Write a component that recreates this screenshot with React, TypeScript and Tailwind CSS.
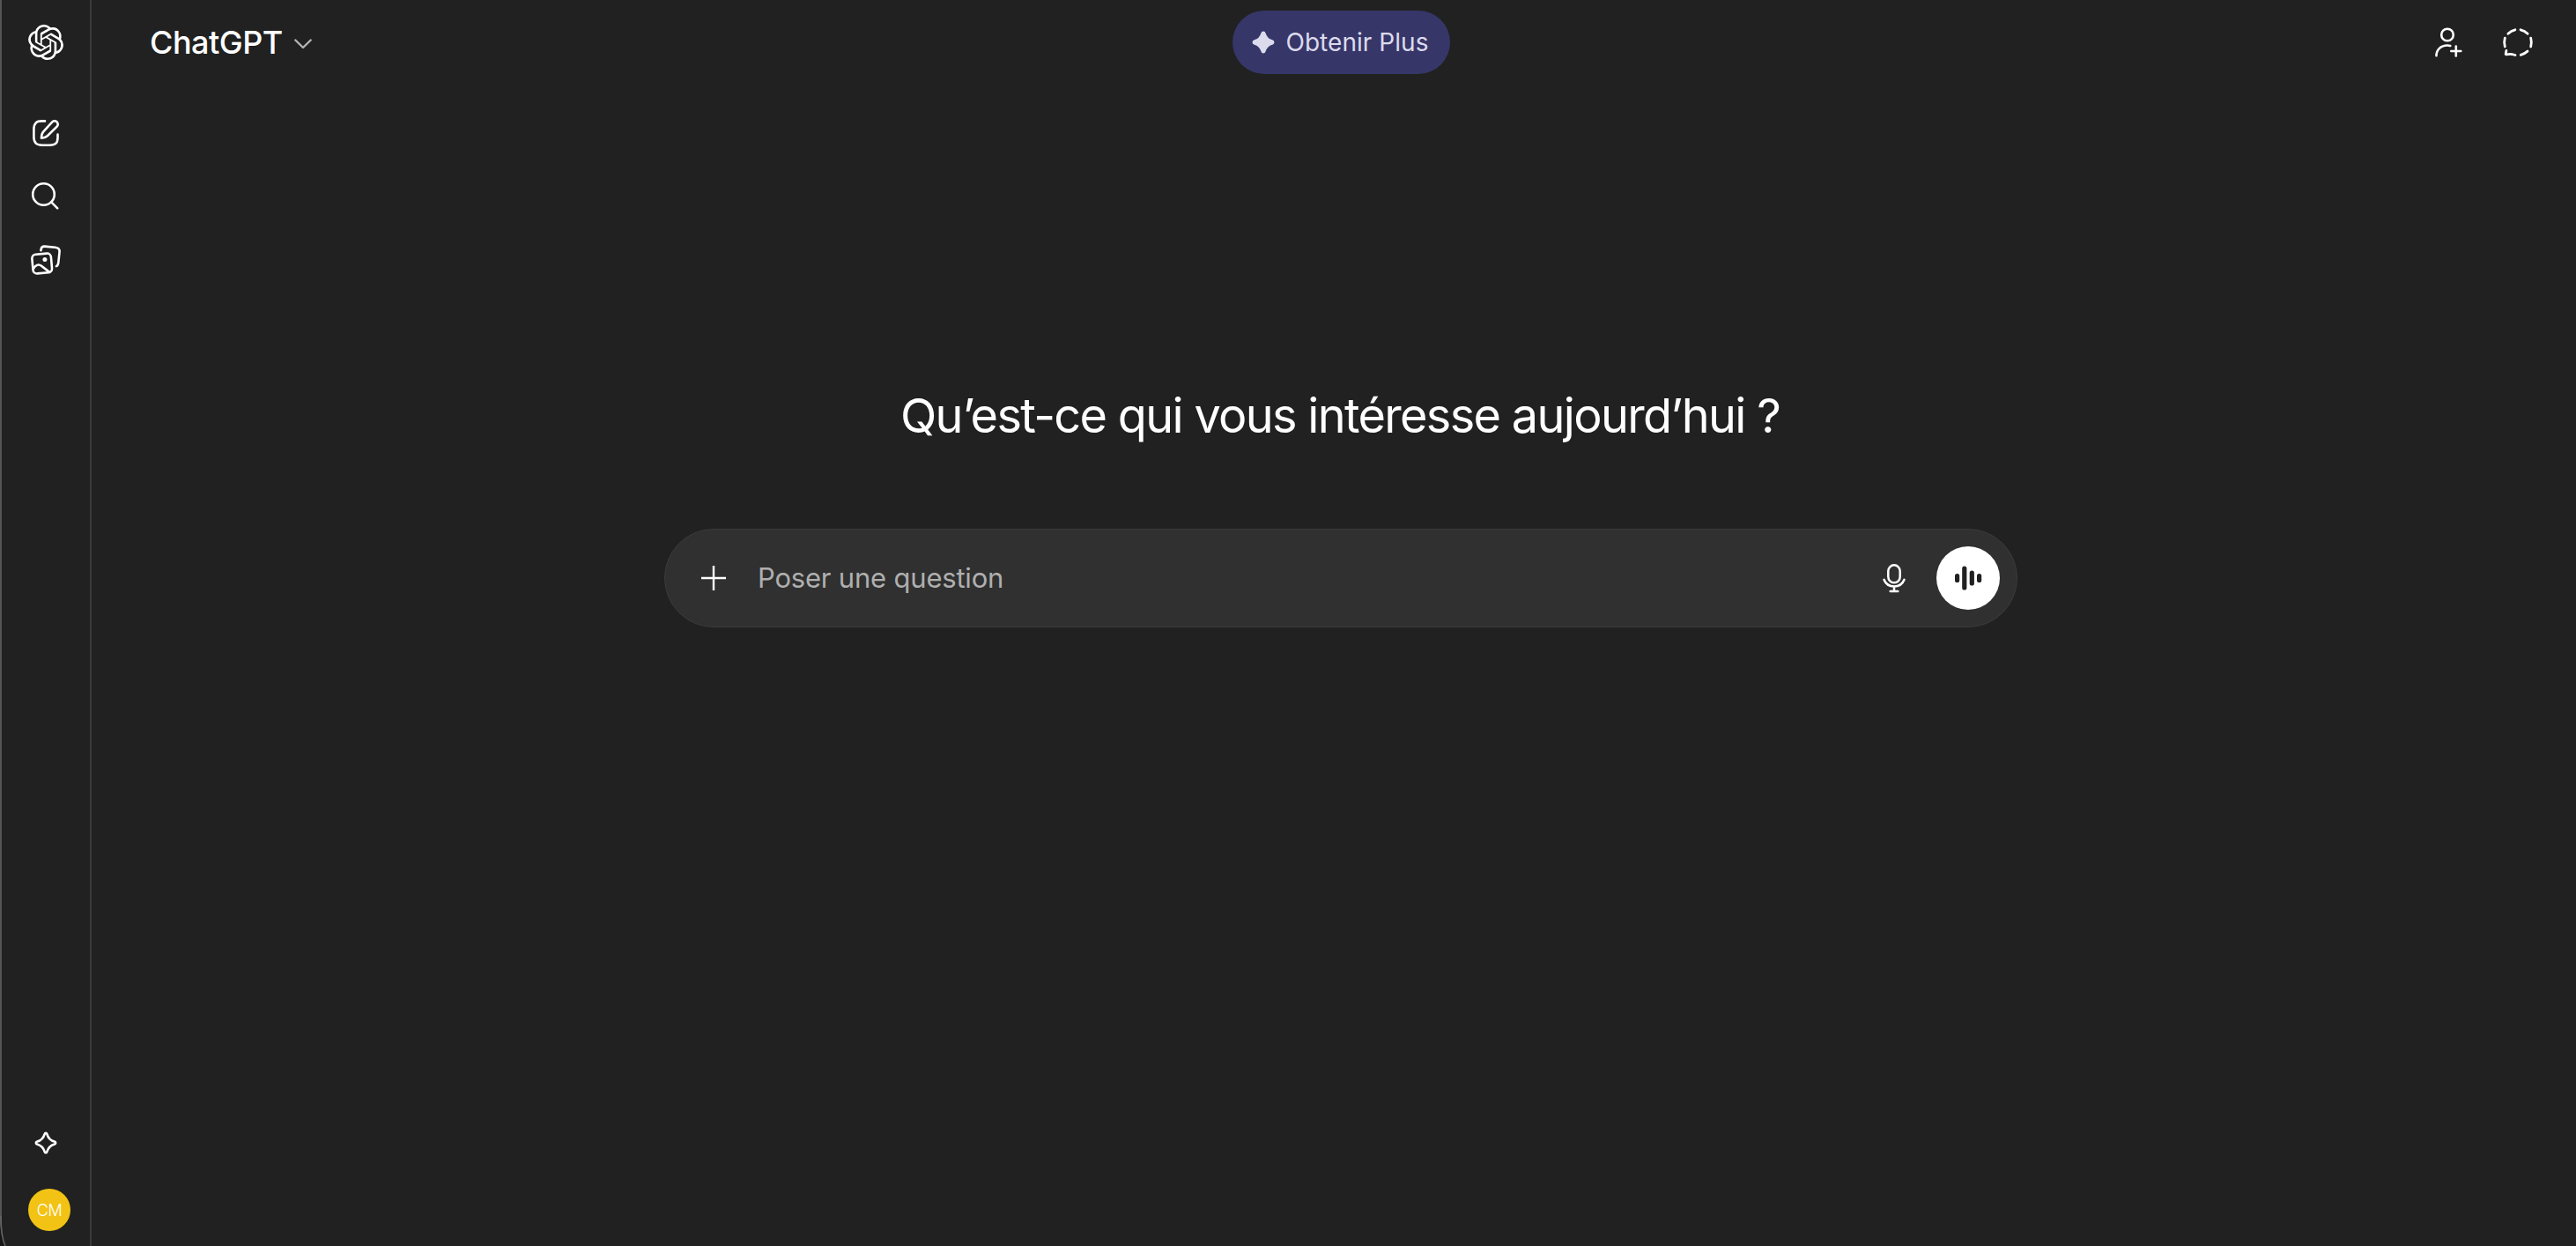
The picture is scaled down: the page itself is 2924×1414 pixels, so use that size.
import React from "react";
import { SiOpenai } from "react-icons/si";

type IconProps = { className?: string };

const iconBase = {
  fill: "none",
  stroke: "currentColor",
  strokeWidth: 2.6,
  strokeLinecap: "round" as const,
  strokeLinejoin: "round" as const,
};

function EditIcon({ className }: IconProps) {
  return (
    <svg viewBox="0 0 40 40" className={className} {...iconBase}>
      <path d="M19 6.400h-3.500c-3.400 0-5 .3-6.500 1.800S6.400 11.800 6.400 15.500v9c0 3.700.900 5.700 2.400 7.200s3.500 2 7.200 2h8.500c3.700 0 5.500-.500 7-2s2-3.500 2-6.700v-3.500" />
      <path d="M27.300 7.400a3.700 3.700 0 0 1 5.300 5.300L21.800 23.200c-1.700 1.600-3.600 2.500-6.800 2.500 0-3.300.600-5.500 2.300-7.300z" />
    </svg>
  );
}

function SearchIcon({ className }: IconProps) {
  return (
    <svg viewBox="0 0 40 40" className={className} {...iconBase}>
      <circle cx="17.500" cy="18.500" r="12.300" />
      <path d="M26.300 27.300l6.900 7" />
    </svg>
  );
}

function LibraryIcon({ className }: IconProps) {
  return (
    <svg viewBox="0 0 40 40" className={className} {...iconBase}>
      <path d="M14.400 11.300l.3-1.800c.4-2.200 1.500-3.100 4-2.900l12 1.200c3.800.4 5.200 2 4.800 5.500l-1.200 11.500c-.3 2.500-.6 3.600-2.400 4.300" />
      <rect x="4.900" y="15.100" width="21.600" height="21.800" rx="4.500" transform="rotate(-5 15.700 26)" />
      <path d="M5.400 32.500c2.800-4.800 6.300-6.300 9.600-3.700l9.200 7.100" />
      <circle cx="18.900" cy="21.400" r="2.500" fill="currentColor" stroke="none" />
    </svg>
  );
}

function SparkleIcon({ className, filled }: IconProps & { filled?: boolean }) {
  return (
    <svg viewBox="0 0 26 26" className={className} {...iconBase} fill={filled ? "currentColor" : "none"}>
      <path d="M11.600 3.100c.5-1.700 2.300-1.700 2.800 0 1.300 4.500 4 7.200 8.500 8.500 1.700.5 1.700 2.300 0 2.800-4.500 1.300-7.200 4-8.500 8.500-.5 1.700-2.300 1.700-2.800 0-1.300-4.500-4-7.200-8.500-8.500-1.700-.5-1.700-2.300 0-2.800 4.500-1.300 7.200-4 8.500-8.500z" />
    </svg>
  );
}

function ChevronIcon({ className }: IconProps) {
  return (
    <svg viewBox="0 0 20 12" className={className} {...iconBase} strokeWidth={2.400}>
      <path d="M1.300 1.500l8.700 8.500 8.700-8.500" />
    </svg>
  );
}

function InviteIcon({ className }: IconProps) {
  return (
    <svg viewBox="0 0 40 40" className={className} {...iconBase}>
      <circle cx="19" cy="11.500" r="6.800" />
      <path d="M6.500 35.200c0-6.500 5-11.700 12.500-11.700 1.300 0 2.300.1 3.300.4" />
      <path d="M28.800 24.500v11M23.300 30h11" />
    </svg>
  );
}

// dashed speech bubble for temporary chat
function TemporaryChatIcon({ className }: IconProps) {
  return (
    <svg viewBox="0 0 40 40" className={className} {...iconBase} strokeWidth={2.800}>
      <path d="M8.900 10.200q3.300-3.200 8-4.400M23.100 5.800q4.700 1.200 8 4.400M34.700 15.200q1.300 4.800 0 9.800M31 30.100q-3.300 3-7.700 4.200M5.300 15.200q-1.300 4.800 0 9.800M6.900 29.500l-.7 3.700q-.1.800.8.700c2.500-.6 5.500-.8 8.300.1l1.700.5" />
    </svg>
  );
}

function PlusIcon({ className }: IconProps) {
  return (
    <svg viewBox="0 0 28 28" className={className} {...iconBase} strokeWidth={2.400} strokeLinecap="butt">
      <path d="M14 0v28M0 14h28" />
    </svg>
  );
}

function MicIcon({ className }: IconProps) {
  return (
    <svg viewBox="0 0 26 34" className={className} {...iconBase} strokeWidth={2.500}>
      <rect x="6.300" y="2.300" width="13.400" height="20" rx="6.700" />
      <path d="M1.500 18.800c1.800 4.700 6 7.700 11.500 7.700s9.700-3 11.500-7.700M13 26.500v5.500M8.700 32h8.600" />
    </svg>
  );
}

function VoiceIcon({ className }: IconProps) {
  return (
    <svg viewBox="0 0 32 32" className={className} fill="currentColor">
      <rect x="1" y="11" width="5.200" height="10" rx="2.600" />
      <rect x="9.200" y="2.500" width="5.200" height="27" rx="2.600" />
      <rect x="17.700" y="7.500" width="5.200" height="17" rx="2.600" />
      <rect x="26" y="11" width="5.200" height="10" rx="2.600" />
    </svg>
  );
}

const navItems = [
  { name: "Nouveau chat", icon: EditIcon },
  { name: "Rechercher", icon: SearchIcon },
  { name: "Bibliothèque", icon: LibraryIcon },
];

function Sidebar() {
  return (
    <aside className="relative flex w-[104px] shrink-0 flex-col border-l-2 border-r-2 border-l-[#555555] border-r-[#3a3a3a] pl-[30px]">
      <SiOpenai className="mt-7 size-10 text-white" />
      <nav className="mt-[63px] flex flex-col gap-[31px]">
        {navItems.map((item) => (
          <button key={item.name} aria-label={item.name} className="size-10">
            <item.icon className="size-10" />
          </button>
        ))}
      </nav>
      <SparkleIcon className="mt-auto ml-[7px] size-[26px]" />
      <div className="mt-[39px] mb-[17px] flex size-12 items-center justify-center rounded-full bg-[#f2c314] text-[18px] font-light tracking-[-0.3px]">
        CM
      </div>
      <svg viewBox="0 0 8 34" className="absolute bottom-0 -left-0.5 h-[34px] w-2" fill="none">
        <path d="M0 6Q1 25 6 34H0z" fill="#171717" />
        <path d="M1 0Q1 23 6 34" stroke="#666666" strokeWidth="1.500" />
      </svg>
    </aside>
  );
}

function Header() {
  return (
    <header className="grid h-24 grid-cols-3 items-center pr-[46px] pl-[66px]">
      <button className="flex items-center gap-[13px]">
        <span className="text-[36px] leading-none font-medium tracking-[-0.5px]">ChatGPT</span>
        <ChevronIcon className="mt-1 h-3 w-5 text-[#b4b4b4]" />
      </button>
      <button className="mr-[3px] flex h-[72px] w-[247px] items-center justify-center gap-3 justify-self-center rounded-full bg-[#373669] pr-0.5 text-[#dcdbed]">
        <SparkleIcon filled className="size-[26px]" />
        <span className="text-[28px] tracking-[0.05px] whitespace-nowrap">Obtenir Plus</span>
      </button>
      <div className="flex gap-[39px] justify-self-end">
        <InviteIcon className="size-10" />
        <TemporaryChatIcon className="size-10" />
      </div>
    </header>
  );
}

function Composer() {
  return (
    <div className="mt-[90px] flex h-28 w-[1536px] items-center rounded-full border border-[#3b3b3b] bg-[#303030] pr-[19px] pl-[41px]">
      <PlusIcon className="size-7" />
      <span className="ml-[36px] flex-1 text-[31px] tracking-[-0.2px] text-[#afafaf]">Poser une question</span>
      <MicIcon className="mr-[35px] h-[34px] w-[26px]" />
      <button className="flex size-[72px] items-center justify-center rounded-full bg-white text-[#212121]">
        <VoiceIcon className="size-8" />
      </button>
    </div>
  );
}

export default function App() {
  return (
    <div className="flex h-[1414px] w-[2924px] overflow-hidden bg-[#212121] font-['Inter','Liberation_Sans',sans-serif] text-white">
      <Sidebar />
      <div className="flex min-w-0 flex-1 flex-col">
        <Header />
        <main className="flex flex-col items-center pl-4">
          <h1 className="mt-[338px] mr-0.5 text-[54px] leading-[76px] tracking-[-1.67px] whitespace-nowrap">
            Qu’est-ce qui vous intéresse aujourd’hui ?
          </h1>
          <Composer />
        </main>
      </div>
    </div>
  );
}
